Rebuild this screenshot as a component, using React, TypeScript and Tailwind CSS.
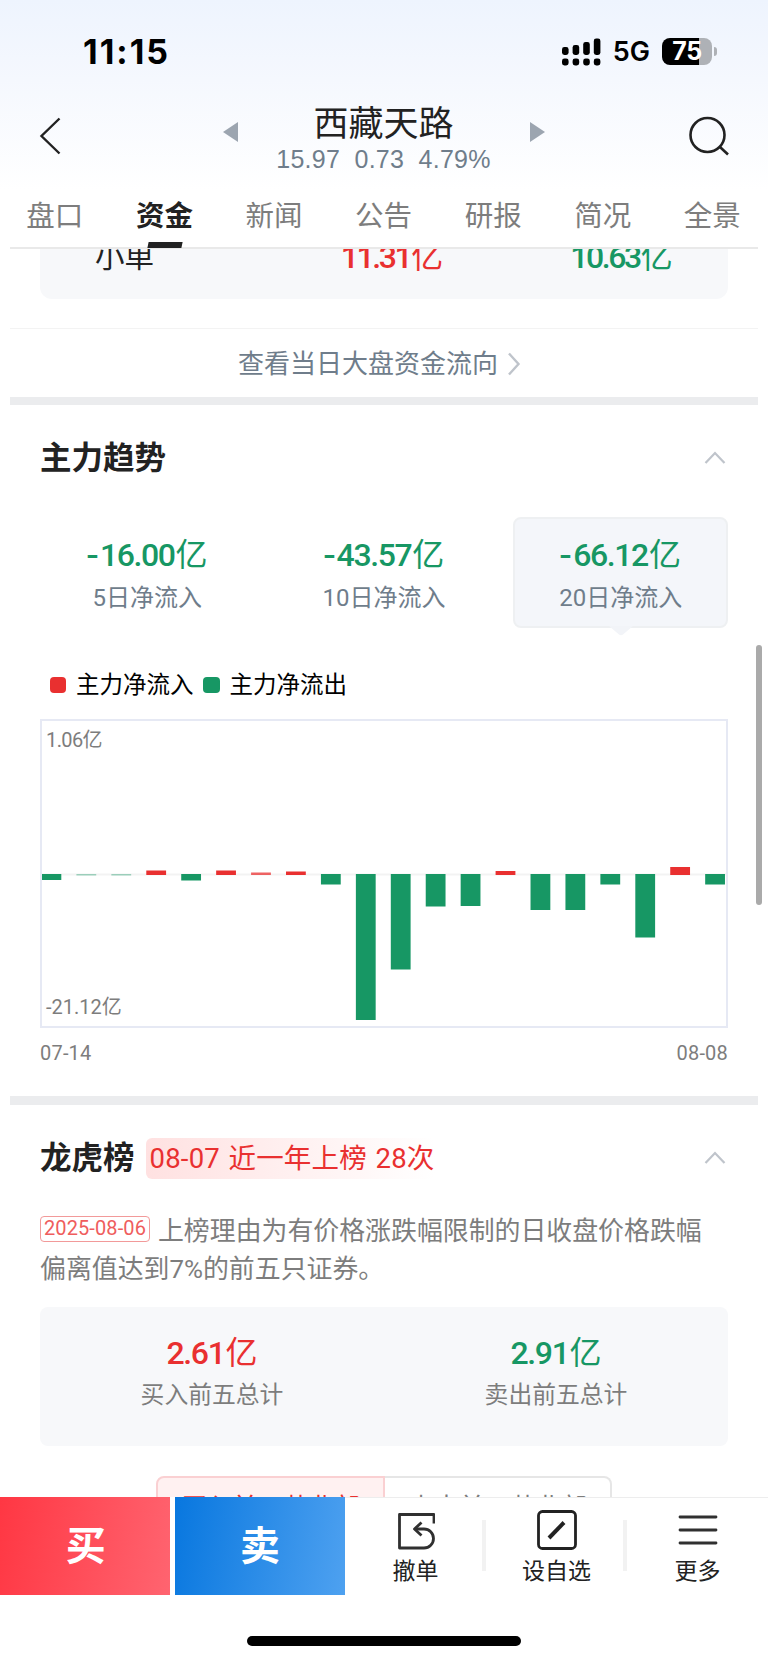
import React from 'react';

const RED = '#e93030';
const GREEN = '#179764';

const tabs = ['盘口', '资金', '新闻', '公告', '研报', '简况', '全景'];

const trends = [
  { value: '-16.00', label: '5日净流入' },
  { value: '-43.57', label: '10日净流入' },
  { value: '-66.12', label: '20日净流入', active: true },
];

// pixel heights, positive is inflow
const flows = [-5.5, -1, -1, 4, -6, 4, 2, 3, -10, -145.5, -95, -32, -31.5, 3.5, -35.5, -35.5, -10, -63, 7.5, -10];

const StatusBar: React.FC = () => (
  <div className="flex h-[96px] items-center pl-[83px] pr-[51px] pt-[7px]">
    <span className="font-['Inter'] text-[34px] font-bold leading-none tracking-[2px] text-black">11:15</span>
    <svg className="ml-auto" width="39" height="28" viewBox="0 0 39 28">
      {[0, 1, 2, 3].map((i) => (
        <g key={i}>
          <rect x={i * 10.6} y={[9, 7, 4, 0.5][i]} width="6.6" height={[8, 10, 13, 16.5][i]} rx="2.4" />
          <rect x={i * 10.6} y="20.5" width="6.6" height="7" rx="2.4" />
        </g>
      ))}
    </svg>
    <span className="ml-[12px] font-['Inter'] text-[27px] font-semibold leading-none text-black">5G</span>
    <div className="ml-[12px] flex h-[27px] w-[50px] items-center justify-center rounded-[8px] bg-[linear-gradient(90deg,#000_75%,#aeb1b6_75%)] font-['Inter'] text-[25px] font-bold leading-none tracking-[-0.5px] text-white">
      75
    </div>
    <div className="ml-[2px] h-[9px] w-[3px] rounded-r-full bg-[#aeb1b6]" />
  </div>
);

const StockHeader: React.FC = () => (
  <div className="flex h-[87px] items-center justify-between pl-[39px] pr-[38px]">
    <svg className="mt-[-8px]" width="22" height="38" viewBox="0 0 22 38" fill="none" stroke="#222" strokeWidth="2.4">
      <path d="M20.5 1.5 2.5 19l18 17.5" />
    </svg>
    <div className="ml-[17px] mt-[-8px] flex items-start">
      <svg className="mt-[23px]" width="15" height="20" viewBox="0 0 15 20">
        <path d="M15 0v20L0 10z" fill="#9ca5b0" />
      </svg>
      <div className="w-[292px] text-center">
        <div className="text-[35px] leading-[51px] text-[#222]">西藏天路</div>
        <div className="mt-[-3px] whitespace-pre font-['Liberation_Sans'] text-[25px] leading-[25px] tracking-[0.25px] text-[#6f7d8b]">15.97  0.73  4.79%</div>
      </div>
      <svg className="mt-[23px]" width="15" height="20" viewBox="0 0 15 20">
        <path d="M0 0v20l15-10z" fill="#9ca5b0" />
      </svg>
    </div>
    <svg className="mt-[-7px]" width="41" height="40" viewBox="0 0 41 40" fill="none" stroke="#222" strokeWidth="2.6">
      <circle cx="18.5" cy="19" r="17" />
      <path d="m31 31 8 7.5" />
    </svg>
  </div>
);

const TabBar: React.FC = () => (
  <div className="mx-[10px] flex h-[66px] border-b-2 border-[#e9e9e9]">
    {tabs.map((tab, i) => (
      <div key={tab} className={`relative ml-[-10px] w-[119.6px] shrink-0 pr-[10px] text-center text-[28.5px] leading-[68px] ${i === 1 ? 'font-bold text-[#222]' : 'text-[#7d7d7d]'}`}>
        {tab}
        {i === 1 && <span className="absolute bottom-[-1px] left-[38px] h-[6px] w-[34px] -skew-x-12 bg-[#222]" />}
      </div>
    ))}
  </div>
);

interface AmountProps {
  value: string;
  up?: boolean;
  tight?: boolean;
}

const Amount: React.FC<AmountProps> = ({ value, up, tight }) => (
  <span className={`text-[32px] leading-[40px] ${up ? 'text-[#e93030]' : 'text-[#179764]'}`}>
    {value.startsWith('-') && <span className="mr-[2px] inline-block scale-x-115 font-medium">-</span>}
    <span className={`font-medium ${tight ? 'tracking-[-2.4px]' : 'tracking-[-1.4px]'}`}>{value.replace('-', '')}</span>
    <span className="ml-px">亿</span>
  </span>
);

const Collapse: React.FC = () => (
  <svg className="mt-[-1px]" width="22" height="13" viewBox="0 0 22 13" fill="none" stroke="#bfc4cb" strokeWidth="2.2">
    <path d="m1.5 12 9.5-10 9.5 10" />
  </svg>
);

const FlowChart: React.FC = () => (
  <div className="relative mt-[19px] h-[309px] border-2 border-[#e6e9f4]">
    <svg className="block" width="684" height="305" viewBox="0 0 684 305">
      <path d="M0 153.5h684" stroke="#f3f3f3" strokeWidth="2" />
      {flows.map((v, i) => (
        <rect
          key={i}
          x={i * 34.93 - 0.5}
          y={v > 0 ? 153.5 - v : 153}
          width="19.8"
          height={Math.abs(v) + 0.5}
          fill={v > 0 ? RED : GREEN}
          opacity={Math.abs(v) <= 1 ? 0.4 : v === 2 ? 0.75 : 1}
        />
      ))}
    </svg>
    <span className="absolute left-[4px] top-[6px] text-[20px] leading-[26px] tracking-[-0.6px] text-[#7d7d7d]">1.06亿</span>
    <span className="absolute bottom-[6px] left-[4px] text-[20px] leading-[26px] text-[#7d7d7d]">-21.12亿</span>
  </div>
);

const BottomBar: React.FC = () => (
  <footer className="h-[166px] shrink-0 bg-white">
    <div className="flex h-[98px]">
      <button className="w-[169.5px] bg-[linear-gradient(100deg,#ff3743,#ff6470)] pl-[2px] pt-[2px] text-[40px] font-bold text-white">买</button>
      <button className="ml-[5.5px] w-[170px] bg-[linear-gradient(100deg,#0877df,#4ea1f0)] pt-[2px] text-[40px] font-bold text-white">卖</button>
      <div className="flex flex-1 border-t border-[#ededed] text-[23px] leading-[30px] text-[#222]">
        <div className="flex w-[137px] flex-col items-center pl-[4px] pt-[13px]">
          <svg width="38" height="39" viewBox="1 0 38 39" fill="none" stroke="#303030" strokeWidth="2.8" strokeLinejoin="round">
            <path d="M38 12.5V3.5H3.500V37H28A9.500 9.500 0 0 0 28 18H19" />
            <path d="m25.500 11.500-7 6.500 7 6.500" />
          </svg>
          <span className="mt-[7px]">撤单</span>
        </div>
        <div className="mt-[22px] h-[51px] w-[4px] bg-[#f2f2f2]" />
        <div className="flex w-[137px] flex-col items-center pl-[4px] pt-[12px]">
          <svg width="40" height="40" viewBox="0 0 40 40" fill="none" stroke="#222" strokeWidth="2.8">
            <rect x="1.5" y="1.5" width="37" height="37" rx="4" />
            <path d="m12 28 15-15.5" strokeWidth="4" />
          </svg>
          <span className="mt-[7px]">设自选</span>
        </div>
        <div className="mt-[22px] h-[51px] w-[4px] bg-[#f2f2f2]" />
        <div className="flex flex-1 flex-col items-center pt-[12px]">
          <svg width="40" height="40" viewBox="0 0 40 40" fill="none" stroke="#303030" strokeWidth="2.8" strokeLinecap="round">
            <path d="M2 7h36M2 20h36M2 33h36" />
          </svg>
          <span className="mt-[7px]">更多</span>
        </div>
      </div>
    </div>
    <div className="mx-auto mt-[41px] h-[10px] w-[274px] rounded-full bg-black" />
  </footer>
);

export default function App() {
  return (
    <div className="relative flex h-[1663px] w-[768px] flex-col overflow-hidden bg-white font-['Roboto','Noto_Sans_CJK_SC',sans-serif]">
      <header className="z-10 h-[249px] shrink-0 bg-[linear-gradient(180deg,#eef4fe_0,#f5f8fe_80px,#fff_190px)]">
        <StatusBar />
        <StockHeader />
        <TabBar />
      </header>

      <main className="h-[1248px] shrink-0 overflow-hidden">
        <div className="mx-[40px] mt-[-20px] flex h-[70px] items-center rounded-[12px] bg-[#f7f8fa] pb-[15px]">
          <span className="w-[229px] pl-[55px] text-[29.5px] leading-[40px] text-[#222]">小单</span>
          <span className="w-[246px] text-center"><Amount value="11.31" up tight /></span>
          <span className="w-[213px] text-center"><Amount value="10.63" tight /></span>
        </div>

        <div className="mx-[10px] mt-[29px] flex h-[69px] items-center justify-center border-t border-[#f3f3f3] pr-[9px] pt-[2px] text-[26px] text-[#6f7d8b]">
          查看当日大盘资金流向
          <svg className="ml-[9px]" width="14" height="24" viewBox="0 0 14 24" fill="none" stroke="#bfc4cb" strokeWidth="2.4">
            <path d="m2 1.5 9.5 10.5L2 22.5" />
          </svg>
        </div>
        <div className="mx-[10px] h-[8px] bg-[#ebecee]" />

        <section className="mx-[40px] h-[691px] pt-[32px]">
          <div className="flex h-[42px] items-center justify-between pr-[2px]">
            <h2 className="pt-px text-[31.5px] font-bold text-[#222]">主力趋势</h2>
            <Collapse />
          </div>
          <div className="mt-[38px] grid grid-cols-3 gap-[22px]">
            {trends.map((t) => (
              <div key={t.label} className={`relative flex h-[111px] flex-col items-center rounded-[8px] border-2 pt-[16px] ${t.active ? 'border-[#eef0f2] bg-[#f4f6fa]' : 'border-transparent'}`}>
                <Amount value={t.value} />
                <span className="mt-[6px] text-[24px] leading-[34px] text-[#6f7d8b]">{t.label}</span>
                {t.active && (
                  <svg className="absolute left-[94px] top-[107px]" width="24" height="11" viewBox="0 0 24 11">
                    <path d="M0 0h24l-10 8.5q-2 1.6-4 0z" fill="#f2f4f8" />
                  </svg>
                )}
              </div>
            ))}
          </div>
          <div className="mt-[42px] flex h-[30px] items-center pl-[10px] text-[23.5px] text-black">
            <i className="mr-[10px] h-[16px] w-[16px] rounded-[4px] bg-[#e93030]" />
            <span className="pt-px">主力净流入</span>
            <i className="ml-[9px] mr-[10px] h-[16px] w-[17px] rounded-[4px] bg-[#179764]" />
            <span className="pt-px">主力净流出</span>
          </div>
          <FlowChart />
          <div className="mt-[12px] flex justify-between text-[20px] leading-[26px] tracking-[0.2px] text-[#7d7d7d]">
            <span>07-14</span>
            <span>08-08</span>
          </div>
        </section>
        <div className="mx-[10px] h-[9px] bg-[#ebecee]" />

        <section className="mx-[40px] pt-[32px]">
          <div className="flex h-[42px] items-center pr-[2px]">
            <h2 className="pt-[2px] text-[31.5px] font-bold text-[#222]">龙虎榜</h2>
            <span className="ml-[11px] mr-auto h-[41px] rounded-[6px] bg-[linear-gradient(90deg,#ffe1e1,#fff)] pl-[4px] text-[27.5px] leading-[41px] tracking-[0.2px] text-[#e93030] [word-spacing:1.5px]">08-07 近一年上榜 28次</span>
            <Collapse />
          </div>
          <p className="mt-[33px] text-[25.9px] leading-[38px] text-[#7d7d7d]">
            <span className="relative top-[-5px] mr-[8px] inline-block h-[26px] rounded-[4px] border border-[#f29a9a] px-[3px] text-[20px] leading-[23px] tracking-[0.1px] text-[#ef5d5d]">2025-08-06</span>
            上榜理由为有价格涨跌幅限制的日收盘价格跌幅<br />偏离值达到7%的前五只证券。
          </p>
          <div className="mt-[19px] grid h-[139px] grid-cols-2 rounded-[8px] bg-[#f7f8fa] pt-[26px] text-center">
            <div>
              <Amount value="2.61" up />
              <div className="mt-[5px] text-[23.8px] leading-[34px] text-[#7d7d7d]">买入前五总计</div>
            </div>
            <div>
              <Amount value="2.91" />
              <div className="mt-[5px] text-[23.8px] leading-[34px] text-[#7d7d7d]">卖出前五总计</div>
            </div>
          </div>
          <div className="mx-auto mt-[30px] flex h-[62px] w-[456px] text-center text-[25.5px] leading-[59px]">
            <div className="flex-1 rounded-l-[8px] border-2 border-[#fad0d2] bg-[#fff1f1] text-[#e93030]">买入前五营业部</div>
            <div className="flex-1 rounded-r-[8px] border-2 border-l-0 border-[#e6e6e6] text-[#7d7d7d]">卖出前五营业部</div>
          </div>
        </section>
      </main>

      <BottomBar />
      <div className="absolute left-[756px] top-[645px] h-[260px] w-[6px] rounded-full bg-[#aaa]" />
    </div>
  );
}
